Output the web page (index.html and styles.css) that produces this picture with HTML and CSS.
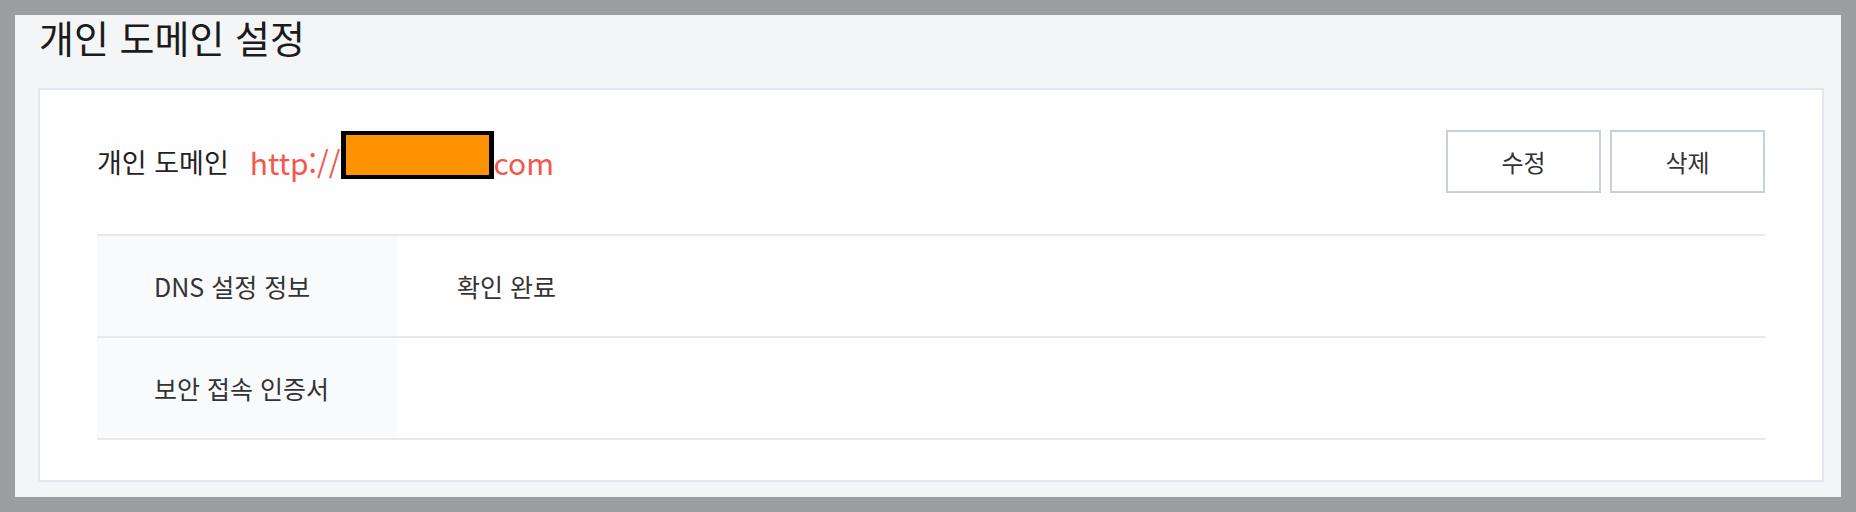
FILE: index.html
```html
<!DOCTYPE html>
<html lang="ko">
<head>
<meta charset="utf-8">
<title>개인 도메인 설정</title>
<link rel="stylesheet" href="styles.css">
</head>
<body>
<div class="frame">
  <div class="panel">
    <h1 class="title">개인 도메인 설정</h1>
    <section class="card">
      <div class="card-head">
        <div class="domain">
          <span class="domain-label">개인 도메인</span>
          <span class="domain-url">http://</span><span class="redact"></span><span class="domain-url">com</span>
        </div>
        <div class="actions">
          <button class="btn" type="button">수정</button>
          <button class="btn" type="button">삭제</button>
        </div>
      </div>
      <div class="info">
        <div class="info-row">
          <div class="info-label">DNS 설정 정보</div>
          <div class="info-value">확인 완료</div>
        </div>
        <div class="info-row">
          <div class="info-label">보안 접속 인증서</div>
          <div class="info-value"></div>
        </div>
      </div>
    </section>
  </div>
</div>
</body>
</html>
```
FILE: styles.css
```css
* { box-sizing: border-box; }
html, body { margin: 0; padding: 0; }
body {
  width: 1856px;
  height: 512px;
  background: #9d9ea0;
  font-family: "Noto Sans CJK KR", "Noto Sans", sans-serif;
  overflow: hidden;
}
.frame {
  padding: 15px;
  height: 512px;
}
.panel {
  background: #f4f5f7;
  height: 482px;
  padding: 0 17px 15px 23px;
}
.title {
  margin: 0;
  height: 73px;
  padding-top: 0;
  font-size: 38px;
  line-height: 44px;
  font-weight: 400;
  color: #1b1b1b;
  padding-left: 1px;
}
.card {
  background: #fefefe;
  border: 2px solid #e3e6ee;
  padding: 40px 57px 40px 57px;
}
.card-head {
  display: flex;
  align-items: center;
  justify-content: space-between;
  height: 63px;
  margin-bottom: 41px;
}
.domain {
  display: flex;
  align-items: center;
}
.domain-label {
  font-size: 27px;
  color: #222;
  margin-right: 21px;
}
.domain-url {
  font-size: 30px;
  color: #f5574b;
}
.redact {
  display: inline-block;
  width: 153px;
  height: 48px;
  background: #ff9200;
  border-style: solid;
  border-color: #000;
  border-width: 4px 5px;
  margin-bottom: 13px;
}
.actions {
  display: flex;
  gap: 9px;
}
.btn {
  width: 155px;
  height: 63px;
  background: #fff;
  border: 2px solid #c8d0dc;
  font-family: "Noto Sans CJK KR", "Noto Sans", sans-serif;
  font-size: 24px;
  color: #333;
  padding: 0;
}
.info-row {
  display: flex;
  height: 102px;
  border-top: 2px solid #e8e9ee;
}
.info-row:last-child {
  height: 104px;
  border-bottom: 2px solid #e8e9ee;
}
.info-label {
  width: 300px;
  background: #f9fafc;
  padding-left: 57px;
  display: flex;
  align-items: center;
  font-size: 25px;
  color: #333;
}
.info-value {
  padding-left: 60px;
  display: flex;
  align-items: center;
  font-size: 25px;
  color: #333;
}
```
